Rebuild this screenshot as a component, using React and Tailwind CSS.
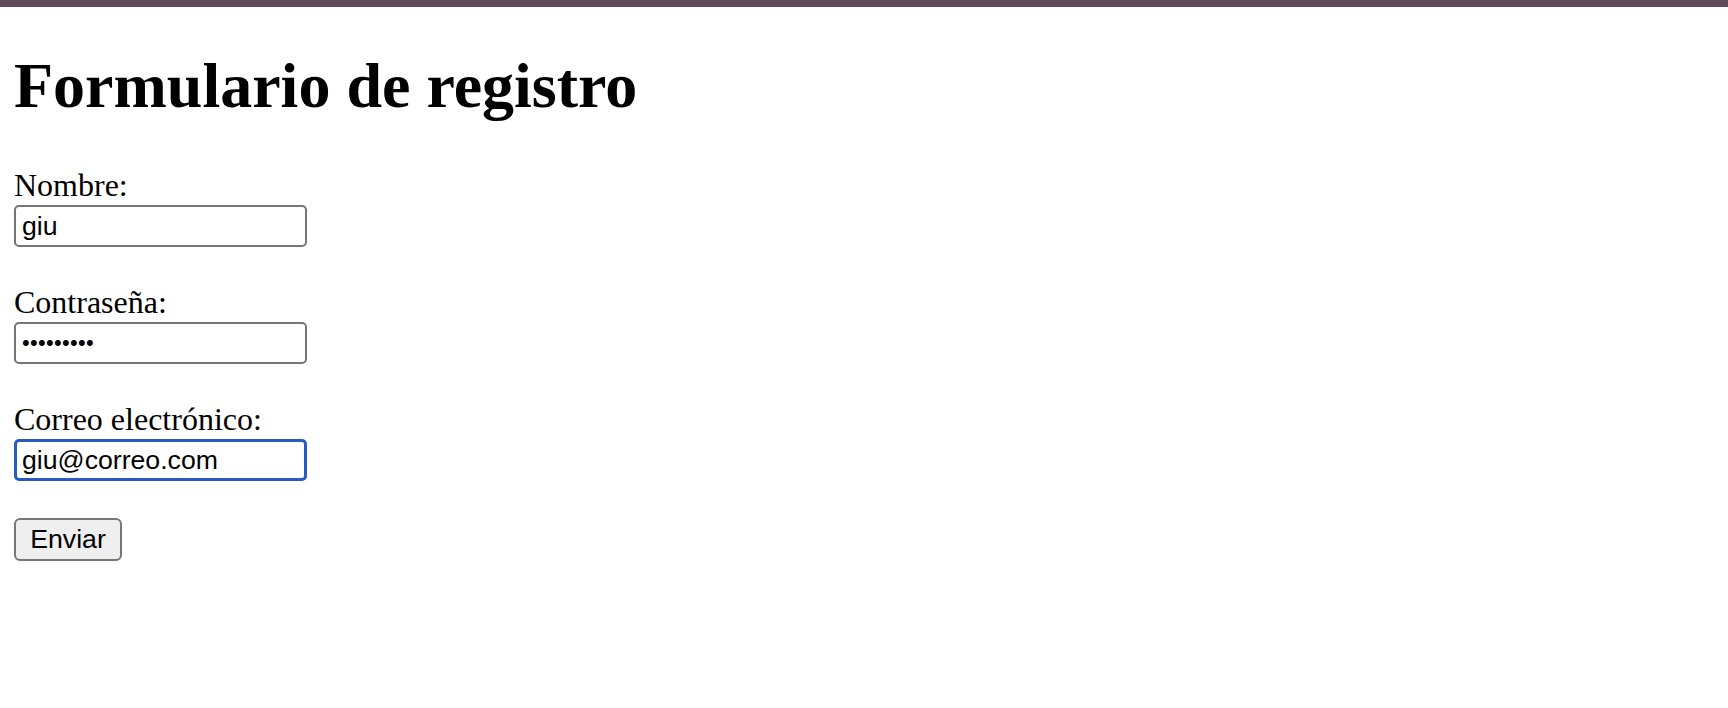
export default function App() {
  const serif = "font-['Liberation_Serif',serif]";
  const sans = "font-['Liberation_Sans',Arial,sans-serif]";

  return (
    <div className="min-h-screen bg-white text-black">
      <div className="h-[7px] bg-[#5e4b5c]" />
      <div className={`pl-[14px] pr-[16px] ${serif}`}>
        <h1 className="mt-[42px] mb-[44px] text-[64px] leading-[74px] font-bold">Formulario de registro</h1>
        <form onSubmit={(e) => e.preventDefault()}>
          <div className="mb-[37px]">
            <label htmlFor="nombre" className="block h-[37px] text-[32px] leading-[37px]">Nombre:</label>
            <input
              id="nombre"
              type="text"
              defaultValue="giu"
              className={`mt-[1px] block w-[293px] h-[42px] border-2 border-[#767676] rounded-[5px] px-[6px] text-[26.67px] outline-none ${sans}`}
            />
          </div>
          <div className="mb-[37px]">
            <label htmlFor="clave" className="block h-[37px] text-[32px] leading-[37px]">Contraseña:</label>
            <input
              id="clave"
              type="password"
              defaultValue="giu123456"
              className={`mt-[1px] block w-[293px] h-[42px] border-2 border-[#767676] rounded-[5px] px-[6px] text-[22px] tracking-[0.3px] outline-none ${sans}`}
            />
          </div>
          <div className="mb-[37px]">
            <label htmlFor="correo" className="block h-[37px] text-[32px] leading-[37px]">Correo electrónico:</label>
            <input
              id="correo"
              type="email"
              defaultValue="giu@correo.com"
              className={`mt-[1px] block w-[293px] h-[42px] border-[3px] border-[#275ac4] rounded-[5px] px-[5px] text-[26.67px] outline-none ${sans}`}
            />
          </div>
          <button
            type="submit"
            className={`w-[108px] h-[43px] bg-[#efefef] border-2 border-[#767676] rounded-[6px] text-[26.67px] leading-none ${sans}`}
          >
            Enviar
          </button>
        </form>
      </div>
    </div>
  );
}
